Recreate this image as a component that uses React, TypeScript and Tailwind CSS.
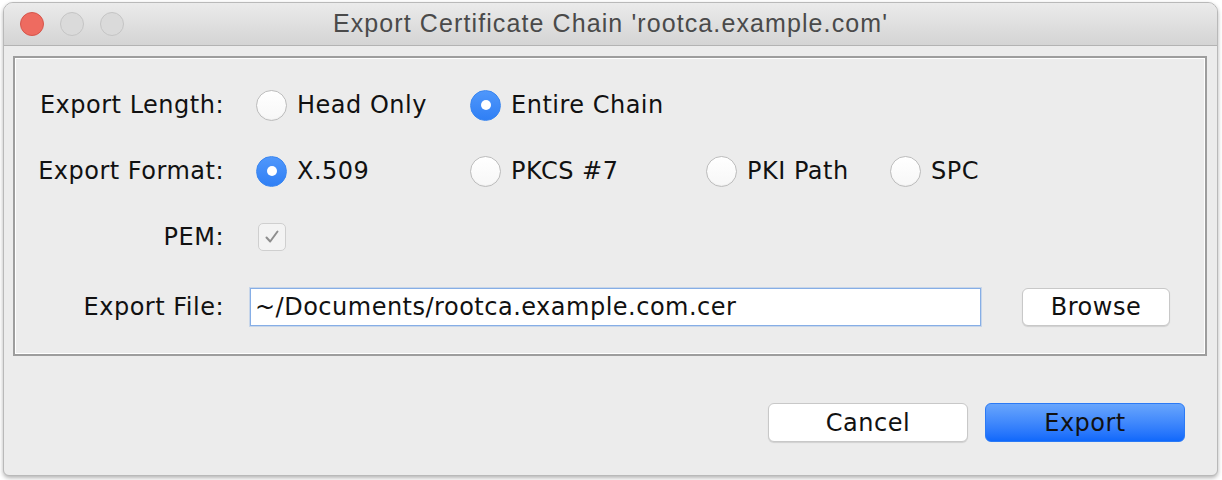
import React, { useState } from 'react';

const font = { fontFamily: '"DejaVu Sans", "Noto Sans", sans-serif' };

type RadioProps = { checked: boolean; label: string; width: string; onSelect: () => void };

const Radio: React.FC<RadioProps> = ({ checked, label, width, onSelect }) => (
  <button onClick={onSelect} className={`flex items-center h-full pl-[6px] ${width}`}>
    {checked ? (
      <span className="w-[31px] h-[31px] rounded-full bg-gradient-to-b from-[#4f97fb] to-[#2f7ff5] border border-[#3a86f0] flex items-center justify-center shrink-0">
        <span className="w-[10px] h-[10px] rounded-full bg-white" />
      </span>
    ) : (
      <span className="w-[31px] h-[31px] rounded-full bg-gradient-to-b from-white to-[#f7f7f7] border border-[#bdbdbd] shadow-[inset_0_-1px_1px_rgba(0,0,0,0.04)] shrink-0" />
    )}
    <span className="ml-[10px] text-[24px] tracking-[0.5px] text-[#111]">{label}</span>
  </button>
);

const Label: React.FC<{ children: React.ReactNode }> = ({ children }) => (
  <div className="w-[209px] text-right text-[24px] tracking-[0.5px] text-[#111] shrink-0">{children}</div>
);

export default function App() {
  const [length, setLength] = useState<'head' | 'chain'>('chain');
  const [format, setFormat] = useState<'x509' | 'pkcs7' | 'pki' | 'spc'>('x509');
  const [file, setFile] = useState('~/Documents/rootca.example.com.cer');

  return (
    <div className="w-[1222px] h-[480px] bg-white pt-[2px] pl-[3px]" style={font}>
      <div className="w-[1215px] h-[474px] rounded-t-[10px] rounded-b-[6px] border border-[#b9b9b9] bg-[#ececec] shadow-[0_2px_4px_rgba(0,0,0,0.3)] overflow-hidden flex flex-col">
        {/* Title bar */}
        <div className="relative h-[43px] shrink-0 bg-gradient-to-b from-[#ebebeb] to-[#d4d4d4] border-b border-[#b3b3b3] flex items-center justify-center">
          <div className="absolute left-[16px] top-[9px] flex gap-[16px]">
            <span className="w-[24px] h-[24px] rounded-full bg-[#ee6b60] border border-[#d5554b]" />
            <span className="w-[24px] h-[24px] rounded-full bg-[#dadada] border border-[#c4c4c4]" />
            <span className="w-[24px] h-[24px] rounded-full bg-[#dadada] border border-[#c4c4c4]" />
          </div>
          <span className="text-[25px] tracking-[1.1px] text-[#4a4a4a]" style={{ fontFamily: '"Liberation Sans", Arial, sans-serif' }}>
            Export Certificate Chain 'rootca.example.com'
          </span>
        </div>

        {/* Etched panel */}
        <div className="ml-[9px] mr-[10px] mt-[10px] h-[300px] border-2 border-[#9d9d9d] outline outline-1 outline-white -outline-offset-3 flex flex-col pt-[27px]">
          <div className="flex items-center h-[40px]">
            <Label>Export Length:</Label>
            <div className="flex items-center h-full ml-[26px]">
              <Radio checked={length === 'head'} label="Head Only" width="w-[214px]" onSelect={() => setLength('head')} />
              <Radio checked={length === 'chain'} label="Entire Chain" width="w-[236px]" onSelect={() => setLength('chain')} />
            </div>
          </div>

          <div className="flex items-center h-[40px] mt-[26px]">
            <Label>Export Format:</Label>
            <div className="flex items-center h-full ml-[26px]">
              <Radio checked={format === 'x509'} label="X.509" width="w-[214px]" onSelect={() => setFormat('x509')} />
              <Radio checked={format === 'pkcs7'} label="PKCS #7" width="w-[236px]" onSelect={() => setFormat('pkcs7')} />
              <Radio checked={format === 'pki'} label="PKI Path" width="w-[184px]" onSelect={() => setFormat('pki')} />
              <Radio checked={format === 'spc'} label="SPC" width="w-[120px]" onSelect={() => setFormat('spc')} />
            </div>
          </div>

          <div className="flex items-center h-[40px] mt-[26px]">
            <Label>PEM:</Label>
            <div className="ml-[34px] w-[28px] h-[28px] rounded-[5px] border border-[#cfcfcf] bg-[#f3f3f3] flex items-center justify-center">
              <svg width="18" height="18" viewBox="0 0 18 18">
                <path d="M3.5 9.5 L7.2 13.5 L14.5 3.5" fill="none" stroke="#8e8e8e" strokeWidth="2" strokeLinecap="round" strokeLinejoin="round" />
              </svg>
            </div>
          </div>

          <div className="flex items-center h-[40px] mt-[30px]">
            <Label>Export File:</Label>
            <input
              value={file}
              onChange={e => setFile(e.target.value)}
              className="ml-[26px] w-[731px] h-[38px] bg-white border border-[#86aee6] shadow-[0_0_0_1px_rgba(134,174,230,0.35)] px-[4px] text-[24px] tracking-[0.5px] text-[#111] outline-none"
              style={font}
            />
            <button className="ml-[41px] w-[148px] h-[38px] rounded-[6px] bg-white border border-[#c8c8c8] shadow-[0_1px_1px_rgba(0,0,0,0.12)] text-[24px] tracking-[0.5px] text-[#111]">
              Browse
            </button>
          </div>
        </div>

        {/* Dialog buttons */}
        <div className="flex justify-end gap-[17px] mt-[47px] pr-[32px]">
          <button className="w-[200px] h-[39px] rounded-[6px] bg-white border border-[#c8c8c8] shadow-[0_1px_1px_rgba(0,0,0,0.12)] text-[24px] tracking-[0.5px] text-[#111]">
            Cancel
          </button>
          <button className="w-[200px] h-[39px] rounded-[6px] bg-gradient-to-b from-[#68a5fc] to-[#0f68fb] border border-[#2b7af5] text-[24px] tracking-[0.5px] text-[#111]">
            Export
          </button>
        </div>
      </div>
    </div>
  );
}
